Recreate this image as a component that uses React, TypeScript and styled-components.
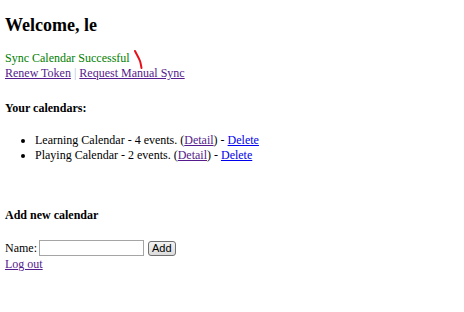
import React from 'react';
import styled, { createGlobalStyle } from 'styled-components';

const GlobalStyle = createGlobalStyle`
    body {
        margin: 0 5px;
        background: #fff;
        color: #000;
        font-family: 'Liberation Serif', 'Times New Roman', serif;
        font-size: 12px;
        line-height: 15px;
    }
`;

const STitle = styled.h2`
    font-size: 18px;
    line-height: 21px;
    font-weight: bold;
    margin: 0;
    padding-top: 15px;
    margin-bottom: 15px;
`;

const SStatus = styled.div`
    color: #008000;
    position: relative;
`;

const SMark = styled.svg`
    position: absolute;
    left: 125px;
    top: -2px;
`;

const SSubHeading = styled.h4<{ $top: number; $bottom: number }>`
    font-size: 12px;
    font-weight: bold;
    margin: ${({ $top }) => $top}px 0 ${({ $bottom }) => $bottom}px;
`;

const SLink = styled.a<{ $visited?: boolean }>`
    color: ${({ $visited }) => ($visited ? '#551a8b' : '#0000ee')};
    text-decoration: underline;
    cursor: pointer;
`;

const SPipe = styled.span`
    color: #a9c4dc;
`;

const SList = styled.ul`
    margin: 0;
    padding-left: 30px;
    list-style: disc;
`;

const SForm = styled.form`
    display: flex;
    align-items: center;
    gap: 3px;
    height: 18px;
`;

const SInput = styled.input`
    width: 101px;
    height: 12px;
    padding: 1px;
    border: 1px solid #a5a5a5;
    margin: 0 0 0 -1px;
    font-size: 12px;
`;

const SButton = styled.button`
    margin: 0 0 0 1px;
    height: 15px;
    padding: 0 3px;
    font-family: 'Liberation Sans', Arial, sans-serif;
    font-size: 11px;
    line-height: 11px;
    border: 1px solid #707070;
    border-radius: 3px;
    background: linear-gradient(#f2f2f2, #dcdcdc);
    color: #000;
`;

const calendars = [
    { name: 'Learning Calendar', events: 4 },
    { name: 'Playing Calendar', events: 2 },
];

export default function App() {
    return (
        <>
            <GlobalStyle />
            <STitle>Welcome, le</STitle>
            <SStatus>
                Sync Calendar Successful
                <SMark width="16" height="22" viewBox="0 0 16 22">
                    <path
                        d="M5 2 C7 6, 9 9, 10 12 C11 15, 11 17, 11.5 19"
                        fill="none"
                        stroke="#e8101a"
                        strokeWidth="2"
                        strokeLinecap="round"
                    />
                </SMark>
            </SStatus>
            <div>
                <SLink $visited>Renew Token</SLink> <SPipe>|</SPipe>{' '}
                <SLink $visited>Request Manual Sync</SLink>
            </div>
            <SSubHeading $top={20} $bottom={17}>
                Your calendars:
            </SSubHeading>
            <SList>
                {calendars.map((c) => (
                    <li key={c.name}>
                        {c.name} - {c.events} events. (
                        <SLink $visited>Detail</SLink>) - <SLink>Delete</SLink>
                    </li>
                ))}
            </SList>
            <SSubHeading $top={45} $bottom={16}>
                Add new calendar
            </SSubHeading>
            <SForm onSubmit={(e) => e.preventDefault()}>
                Name: <SInput type="text" />
                <SButton type="submit">Add</SButton>
            </SForm>
            <SLink $visited>Log out</SLink>
        </>
    );
}
